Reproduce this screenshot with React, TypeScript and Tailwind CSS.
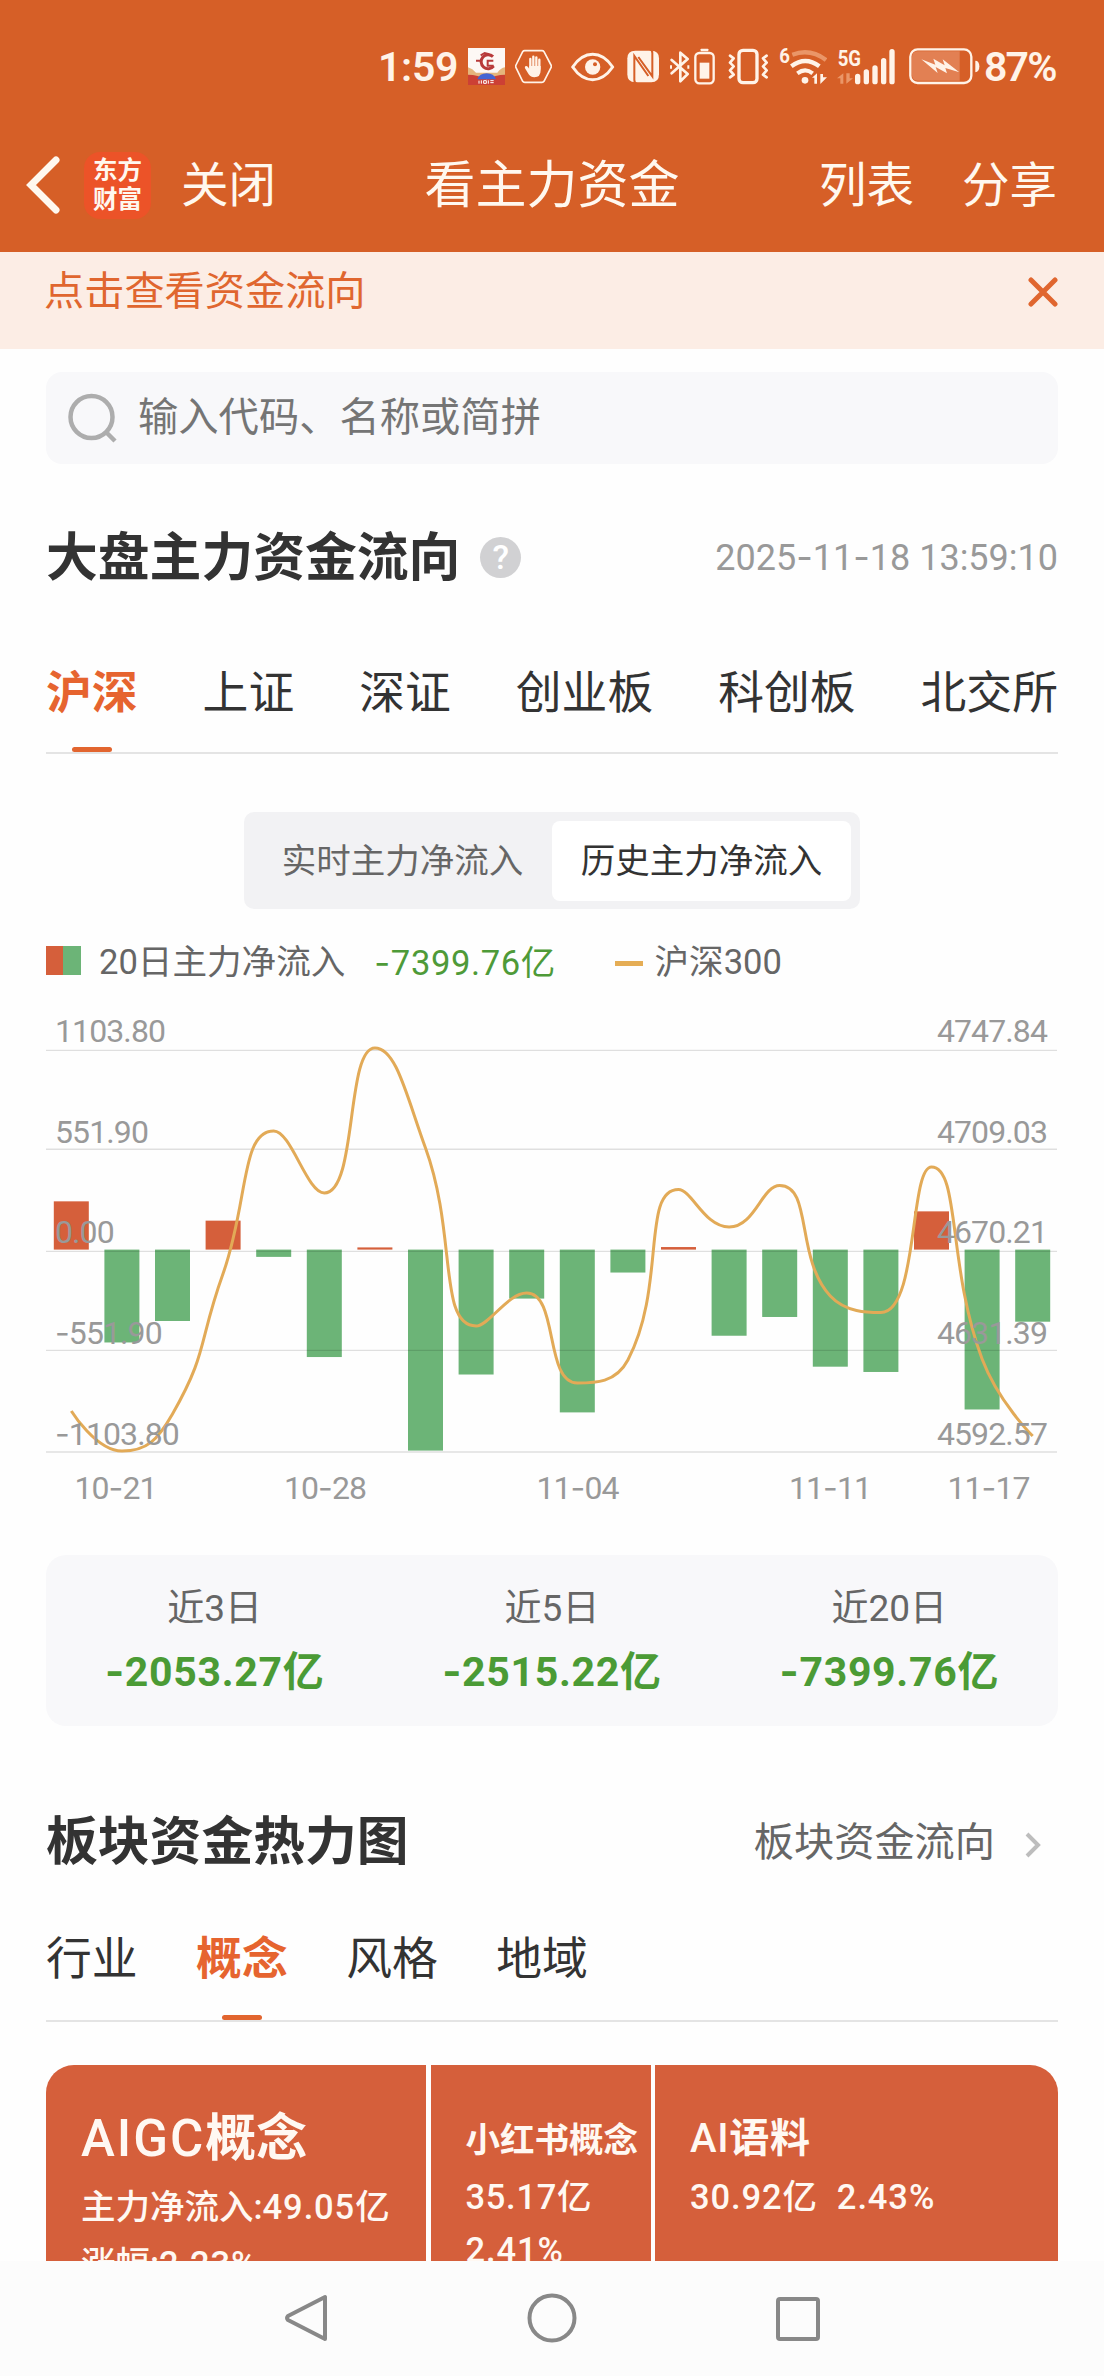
import { Fragment, type ReactNode } from 'react'
import clsx from 'clsx'

const MARKETS = ['沪深', '上证', '深证', '创业板', '科创板', '北交所']
const CATEGORIES = ['行业', '概念', '风格', '地域']

const SUMMARY = [
  { label: '近3日', value: '-2053.27亿' },
  { label: '近5日', value: '-2515.22亿' },
  { label: '近20日', value: '-7399.76亿' },
]

// net inflow per day
const FLOWS = [265, -510, -392, 159, -40, -590, 12, -1103.8, -686, -269, -894, -126, 14, -473, -370, -643, -672, 210, -878, -396]

// CSI 300 curve, y in chart pixels
const INDEX_Y = [427, 467, 430, 289.5, 147, 209, 64, 164, 342, 309, 399, 376, 205.6, 243, 201.4, 312, 328.5, 183, 375, 452]

const GRID_Y = [66.4, 165.3, 267.4, 366.4, 468]
const AXIS = [
  { y: 58, left: '1103.80', right: '4747.84' },
  { y: 159, left: '551.90', right: '4709.03' },
  { y: 259, left: '0.00', right: '4670.21' },
  { y: 359.6, left: '-551.90', right: '4631.39' },
  { y: 460.6, left: '-1103.80', right: '4592.57' },
]
const DATES = [
  { x: 69.5, label: '10-21' },
  { x: 279, label: '10-28' },
  { x: 531.5, label: '11-04' },
  { x: 784, label: '11-11' },
  { x: 942.5, label: '11-17' },
]

const STEP = 50.6
const BASE = 265.6
const SCALE = 201 / 1103.8

const clamp = (v: number, a: number, b: number) => Math.min(Math.max(v, Math.min(a, b)), Math.max(a, b))

function smoothPath(pts: number[][], smooth = 0.5) {
  let d = `M${pts[0][0]} ${pts[0][1]}`
  let [c0x, c0y] = pts[0]
  for (let i = 1; i < pts.length; i++) {
    const [px, py] = pts[i - 1]
    const [x, y] = pts[i]
    let c1x = x
    let c1y = y
    let n0x = x
    let n0y = y
    if (i < pts.length - 1) {
      const [nx, ny] = pts[i + 1]
      const prev = Math.hypot(x - px, y - py)
      const next = Math.hypot(nx - x, ny - y)
      const ratio = next / (next + prev)
      n0x = clamp(x + (nx - px) * smooth * ratio, nx, x)
      n0y = clamp(y + (ny - py) * smooth * ratio, ny, y)
      c1x = clamp(x - ((n0x - x) * prev) / next, px, x)
      c1y = clamp(y - ((n0y - y) * prev) / next, py, y)
      n0x = x + ((x - c1x) * next) / prev
      n0y = y + ((y - c1y) * next) / prev
    }
    d += `C${c0x} ${c0y} ${c1x} ${c1y} ${x} ${y}`
    c0x = n0x
    c0y = n0y
  }
  return d
}

// figures use the wider Inter hyphen
function dashed(text: string, Tag: 'span' | 'tspan' = 'span') {
  return text.split('-').map((part, i) => (
    <Fragment key={i}>
      {i > 0 && <Tag className="font-[Inter]">-</Tag>}
      {part}
    </Fragment>
  ))
}

function StatusIcon({ x, w, className, children }: { x: number; w: number; className?: string; children: ReactNode }) {
  return (
    <svg viewBox={`${x} 45 ${w * 3} 126`} width={w} height={42} className={clsx('shrink-0', className)} fill="none">
      {children}
    </svg>
  )
}

function StatusBar() {
  const c = '#fff3e8'
  return (
    <div className="flex h-[118px] items-center pt-3.5 pl-[378px] text-[41px] leading-[42px] font-semibold text-[#fff3e8]">
      <span className="w-[81px] shrink-0 pt-0.5 tracking-[-0.3px]">1:59</span>
      <StatusIcon x={324} w={37} className="ml-[9px]">
        <rect x="324" y="54" width="111" height="111" fill="#fdf8f5" />
        <path d="M324 112q14 4 24 16h64q10-14 23-16v30H324z" fill="#e5b57c" />
        <path d="M324 134q30 0 56 14 26-14 55-14v31H324z" fill="#cc4035" />
        <path d="M352 148q6-18 28-18t28 18z" fill="#4463d3" />
        <path d="M399 80a21 21 0 1 0 2 28" stroke="#b83a3a" strokeWidth="9" />
        <path d="M348 92h16M362 76l12-7 14 4M400 92h-17v15h18" stroke="#b83a3a" strokeWidth="6" />
        <path d="M357 152v9M364 151v10M371 152h8v8h-8zM385 151v10M391 152h10M391 158h10" stroke="#fff" strokeWidth="3" />
      </StatusIcon>
      <StatusIcon x={465} w={37} className="ml-2.5">
        <path d="M494 62h52q4 0 6 3l21 40q2 4 0 8l-21 41q-2 3-6 3h-52q-4 0-6-3l-20-41q-2-4 0-8l20-40q2-3 6-3z" stroke={c} strokeWidth="5" />
        <path d="M511 116V87M520 112V80M529 112V82M538 116V89" stroke={c} strokeWidth="7" strokeLinecap="round" />
        <path d="M508 108h34v13q0 21-19 21-11 0-17-9l-11-18q-2-5 2-7 4-1 7 3l4 6z" fill={c} />
      </StatusIcon>
      <StatusIcon x={633} w={44} className="ml-[19px]">
        <path d="M638 111q26-38 60-38t60 38q-26 38-60 38t-60-38z" stroke={c} strokeWidth="9" strokeLinejoin="round" />
        <circle cx="698" cy="111" r="23" fill={c} />
        <circle cx="705" cy="103" r="6" fill="#d65f27" />
      </StatusIcon>
      <StatusIcon x={799} w={33} className="ml-3">
        <path d="M824 62h48q23 0 23 23v48q0 24-23 24h-48q-24 0-24-24V85q0-23 24-23z" fill={c} />
        <path d="M830 162q-9-2-9-12V78l42 60" stroke="#d65f27" strokeWidth="6" />
        <path d="M866 57q9 2 9 12v70l-42-58" stroke="#d65f27" strokeWidth="6" />
      </StatusIcon>
      <StatusIcon x={931} w={21} className="ml-2.5">
        <path d="M936 90l48 42-22 22V68l22 19-48 43" stroke={c} strokeWidth="8" strokeLinejoin="round" strokeLinecap="round" />
        <path d="M934 106v10M986 106v10" stroke={c} strokeWidth="6" />
      </StatusIcon>
      <StatusIcon x={1002} w={21} className="ml-[3px]">
        <rect x="1006" y="69" width="55" height="91" rx="12" stroke={c} strokeWidth="7" />
        <rect x="1022" y="56" width="23" height="8" rx="2" fill={c} />
        <rect x="1019" y="98" width="29" height="48" fill={c} />
      </StatusIcon>
      <StatusIcon x={24} w={41} className="ml-[13px]">
        <rect x="57" y="61" width="54" height="97" rx="12" stroke={c} strokeWidth="10" />
        <path d="M30 77l11 8-11 13 11 11-11 12 11 13-11 8M140 77l-11 8 11 13-11 11 11 12-11 13 11 8" stroke={c} strokeWidth="8" strokeLinecap="round" strokeLinejoin="round" />
      </StatusIcon>
      <StatusIcon x={177} w={48} className="ml-2.5">
        <text x="178" y="98" fontSize="60" fontWeight="700" textLength="32" lengthAdjust="spacingAndGlyphs" fill={c}>6</text>
        <path d="M217 74q54-20 101 16" stroke="#ea9668" strokeWidth="13" />
        <path d="M214 109q42-32 84 0" stroke={c} strokeWidth="13" />
        <path d="M232 130q24-18 46 0" stroke={c} strokeWidth="12" />
        <circle cx="255" cy="151" r="10" fill={c} />
        <path d="M276 143l15-13v31h-8v-18zM301 132v30l20-20h-12v-10z" fill={c} />
      </StatusIcon>
      <StatusIcon x={351} w={58} className="ml-2.5">
        <text x="353" y="108" fontSize="68" fontWeight="700" textLength="70" lengthAdjust="spacingAndGlyphs" fill={c}>5G</text>
        <path d="M351 145l19-15v31h-9v-16zM379 130v31l20-16h-10v-15z" fill="#ea9668" />
        <path d="M413 139v16M439 126v29M465 114v41M491 92v63M516 65v90" stroke={c} strokeWidth="16" strokeLinecap="round" />
      </StatusIcon>
      <StatusIcon x={566} w={71} className="ml-3.5">
        <path d="M592 64h126v88H592q-17 0-17-17V81q0-17 17-17z" fill="#e28053" />
        <rect x="570" y="58" width="183" height="101" rx="22" stroke={c} strokeWidth="7" />
        <path d="M765 92q12 0 12 17t-12 18z" fill={c} />
        <path d="M603 88l42 16-6-18 34 20-6-18 50 39-42-13 5 16-34-19 6 18z" fill={c} />
      </StatusIcon>
      <span className="ml-1 pt-0.5 tracking-[-1.8px]">87%</span>
    </div>
  )
}

function Header() {
  return (
    <header className="bg-[#d65f27] text-[#fff8ef]">
      <StatusBar />
      <div className="grid h-[134px] grid-cols-[1fr_auto_1fr] items-center px-[26px] pt-0.5 text-[47.5px] leading-[60px]">
        <div className="flex items-center">
          <svg width="34" height="58" viewBox="0 0 34 58" fill="none" stroke="currentColor" strokeWidth="7" className="-mt-0.5">
            <path d="M30 4L5 29l25 25" strokeLinecap="round" />
          </svg>
          <div className="-mt-0.5 ml-6 flex h-[67px] w-[67px] flex-col items-center justify-center rounded-2xl bg-[#ec5328] text-[24.5px] leading-[29px] font-bold">
            <span>东方</span>
            <span>财富</span>
          </div>
          <span className="ml-[30px]">关闭</span>
        </div>
        <h1 className="text-[51px]">看主力资金</h1>
        <div className="flex justify-end gap-12 pr-[21px]">
          <span>列表</span>
          <span>分享</span>
        </div>
      </div>
    </header>
  )
}

function Tabs({ items, active, className }: { items: string[]; active: number; className?: string }) {
  return (
    <nav className={clsx('flex border-b-2 border-[#e4e4e4] text-[45.8px] leading-[68px] text-[#333]', className)}>
      {items.map((item, i) => (
        <div key={item} className={clsx('flex flex-col items-center justify-between', i === active && 'font-bold text-[#e6642f]')}>
          <span>{item}</span>
          {i === active && <i className="h-[5px] w-10 rounded-full bg-[#e2652f]" />}
        </div>
      ))}
    </nav>
  )
}

function FlowChart() {
  const line = smoothPath(INDEX_Y.map((y, i) => [STEP * (i + 0.5), y]))
  return (
    <svg width="1012" height="536" viewBox="0 0 1012 536" className="block shrink-0">
      {FLOWS.map((v, i) => {
        const h = Math.abs(v) * SCALE
        return (
          <rect key={i} x={STEP * (i + 0.5) - 17.5} y={v > 0 ? BASE - h : BASE} width="35" height={h} fill={v > 0 ? '#d55f3b' : '#6cb477'} />
        )
      })}
      {GRID_Y.map((y) => (
        <line key={y} x1="0" x2="1011" y1={y} y2={y} stroke="#000" strokeOpacity="0.12" strokeWidth="1.4" />
      ))}
      <path d={line} fill="none" stroke="#e2aa57" strokeWidth="3" />
      <g fill="#999" fontSize="32" letterSpacing="-0.9">
        {AXIS.map((a) => (
          <g key={a.y}>
            <text x="9" y={a.y}>{dashed(a.left, 'tspan')}</text>
            <text x="1001" y={a.y} textAnchor="end">{a.right}</text>
          </g>
        ))}
        {DATES.map((d) => (
          <text key={d.label} x={d.x} y="515" textAnchor="middle">{dashed(d.label, 'tspan')}</text>
        ))}
      </g>
    </svg>
  )
}

function NavBar() {
  return (
    <footer className="flex h-[115px] items-start justify-center gap-[199px] bg-[#fcfcfc] pt-[31px]">
      <svg width="46" height="52" viewBox="0 0 46 52" fill="none" stroke="#888" strokeWidth="4" strokeLinejoin="round">
        <path d="M43 5v42L6 28q-2-2 0-4z" />
      </svg>
      <svg width="50" height="52" viewBox="0 0 50 52" fill="none" stroke="#888" strokeWidth="4">
        <circle cx="25" cy="26" r="22.5" />
      </svg>
      <svg width="46" height="52" viewBox="0 0 46 52" fill="none" stroke="#888" strokeWidth="4">
        <rect x="2" y="7" width="40" height="40" rx="2" />
      </svg>
    </footer>
  )
}

export default function App() {
  return (
    <div className="h-[2376px] w-[1104px] overflow-hidden bg-[#fefefe] font-[Roboto,'Noto_Sans_CJK_SC',sans-serif]" lang="zh-CN">
      <Header />

      <div className="flex h-[97px] justify-between bg-[#fcede5] pt-2.5 pr-[46px] pl-11 text-[40.2px] leading-[60px] text-[#e0662f]">
        <span>点击查看资金流向</span>
        <svg width="30" height="60" viewBox="0 0 30 60" stroke="currentColor" strokeWidth="5" strokeLinecap="round">
          <path d="M3 18l24 24M27 18L3 42" />
        </svg>
      </div>

      <main className="flex h-[1912px] flex-col overflow-hidden px-[46px]">
        <div className="mt-[23px] flex h-[92px] shrink-0 items-center rounded-2xl bg-[#f8f8fa] pl-[22px] text-[40.3px] leading-[60px] text-[#757575]">
          <svg width="50" height="50" viewBox="0 0 50 50" fill="none" stroke="#adadad" strokeWidth="4.5">
            <circle cx="23.5" cy="24" r="21" />
            <path d="M38 39l9 9" />
          </svg>
          <span className="ml-5">输入代码、名称或简拼</span>
        </div>

        <div className="mt-[60px] flex h-[66px] shrink-0 items-center">
          <h2 className="pt-1 text-[51.8px] leading-[66px] font-bold text-[#333]">大盘主力资金流向</h2>
          <span className="ml-[20px] flex size-[41px] items-center justify-center rounded-full bg-[#d1d1d3] text-[34px] font-medium text-white">?</span>
          <span className="ml-auto text-[36px] text-[#999]">{dashed('2025-11-18 13:59:10')}</span>
        </div>

        <Tabs items={MARKETS} active={0} className="mt-[70px] h-[94px] shrink-0 justify-between" />

        <div className="mt-[58px] grid h-[97px] w-[616px] shrink-0 grid-cols-2 self-center rounded-[10px] bg-[#f2f2f4] p-[9px] text-center text-[34.5px] leading-[80px]">
          <span className="text-[#666]">实时主力净流入</span>
          <span className="rounded-lg bg-white text-[#333]">历史主力净流入</span>
        </div>

        <div className="mt-[31px] flex h-11 shrink-0 items-center text-[34.6px] leading-[44px] text-[#666]">
          <i className="mb-1 h-[29px] w-[17px] bg-[#d55f3b]" />
          <i className="mb-1 h-[29px] w-[18px] bg-[#6cb477]" />
          <span className="ml-[18px]">20日主力净流入</span>
          <span className="ml-[29px] tracking-[0.6px] text-[#4e9a38]">{dashed('-7399.76亿')}</span>
          <i className="mt-0.5 ml-auto h-[5px] w-7 bg-[#e5ad55]" />
          <span className="mr-[276px] ml-3">沪深300</span>
        </div>

        <FlowChart />

        <div className="mt-[35px] grid h-[171px] shrink-0 grid-cols-3 content-center rounded-[20px] bg-[#f8f8fa] text-center">
          {SUMMARY.map((s) => (
            <div key={s.label}>
              <p className="text-[37px] leading-[62px] text-[#666]">{s.label}</p>
              <p className="text-[41px] leading-[62px] font-bold tracking-[0.7px] text-[#4b9b35]">{dashed(s.value)}</p>
            </div>
          ))}
        </div>

        <div className="mt-[82px] flex h-[66px] shrink-0 items-center justify-between leading-[66px]">
          <h2 className="pt-1 text-[51.8px] font-bold text-[#333]">板块资金热力图</h2>
          <div className="flex items-center pt-1 pr-4 text-[40.2px] text-[#666]">
            板块资金流向
            <svg className="mt-1 ml-[29px]" width="18" height="30" viewBox="0 0 18 30" fill="none" stroke="#bdbdbd" strokeWidth="4">
              <path d="M3 4l11 11L3 26" />
            </svg>
          </div>
        </div>

        <Tabs items={CATEGORIES} active={1} className="mt-[52px] h-24 shrink-0 gap-[58.5px]" />

        <div className="mt-[43px] grid h-[320px] shrink-0 grid-cols-[380px_220px_1fr] gap-[4.5px] overflow-hidden rounded-t-[28px] text-[34.5px] font-medium whitespace-nowrap text-[#fff8f2] *:bg-[#d55f3b]">
          <div className="pt-10 pl-[35px] leading-[57px]">
            <p className="text-[51px] leading-[68px]"><span className="tracking-[2px]">AIGC</span><b>概念</b></p>
            <p className="pt-1.5">主力净流入:<span className="tracking-[0.9px]">49.05亿</span></p>
            <p>涨幅:<span className="tracking-[0.9px]">2.23%</span></p>
          </div>
          <div className="pt-[49px] pl-[35px] leading-[53px]">
            <p className="pb-1 font-bold">小红书概念</p>
            <p className="tracking-[0.7px]">35.17亿</p>
            <p className="tracking-[0.9px]">2.41%</p>
          </div>
          <div className="pt-[47px] pl-[35px] leading-[54px]">
            <p className="pb-1 text-[40px] tracking-[0.7px]">AI<b>语料</b></p>
            <p className="tracking-[0.9px] whitespace-pre">30.92亿  2.43%</p>
          </div>
        </div>
      </main>

      <NavBar />
    </div>
  )
}
